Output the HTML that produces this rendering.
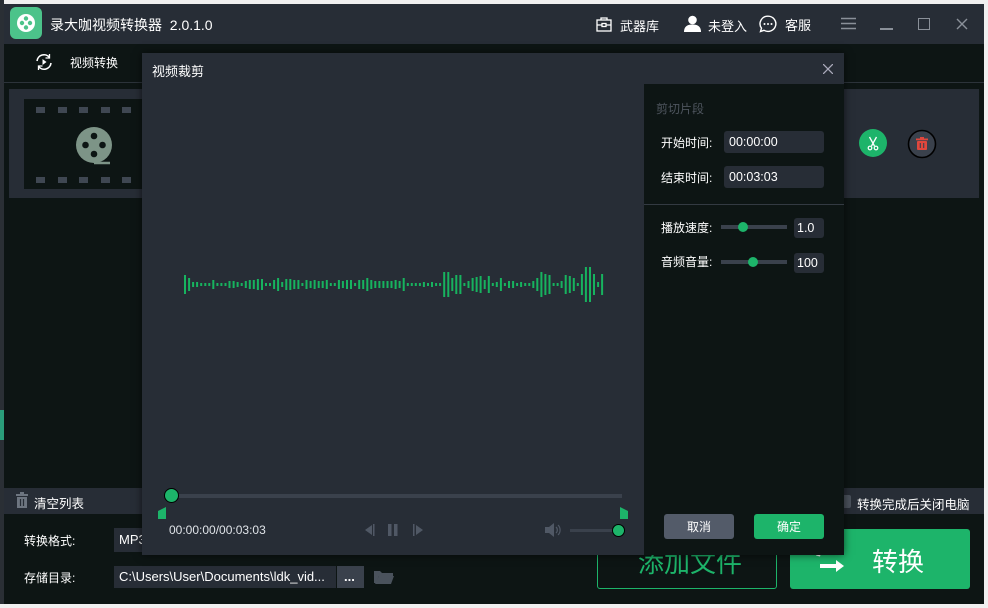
<!DOCTYPE html>
<html><head><meta charset="utf-8">
<style>
*{margin:0;padding:0;box-sizing:border-box}
body{width:988px;height:608px;overflow:hidden;background:#f0f0f0;font-family:"Liberation Sans","Noto Sans CJK SC",sans-serif;color:#fff;font-size:13px;position:relative}
.a{position:absolute}
.t{white-space:nowrap}
</style></head><body>
<div class="a" style="left:0;top:0;width:4px;height:608px;background:#2a2f35"></div>
<div class="a" style="left:0;top:410px;width:4px;height:30px;background:#2a9d7a"></div>
<!-- app -->
<div class="a" style="left:4px;top:4px;width:980px;height:600px;background:#0d1514"></div>
<div class="a" style="left:4px;top:4px;width:980px;height:40px;background:#272d36"></div>
<div class="a" style="left:10px;top:7px;width:32px;height:32px;border-radius:6px;background:#4cc38a"></div>
<svg class="a" style="left:13px;top:11px" width="26" height="24" viewBox="0 0 26 24"><circle cx="13" cy="12" r="9" fill="#fff"/><circle cx="13" cy="7.5" r="2.2" fill="#4cc38a"/><circle cx="9" cy="12" r="2.2" fill="#4cc38a"/><circle cx="17" cy="12" r="2.2" fill="#4cc38a"/><circle cx="13" cy="16.5" r="2.2" fill="#4cc38a"/></svg>
<div class="a t" style="left:50px;top:15px;font-size:14px">录大咖视频转换器&nbsp; 2.0.1.0</div>
<svg class="a" style="left:596px;top:17px" width="16" height="15" viewBox="0 0 16 15" fill="none" stroke="#fff" stroke-width="1.3"><rect x="1" y="3" width="14" height="11"/><path d="M5 3V1h6v2M1 8h14"/><rect x="6" y="6.5" width="4" height="3" fill="#272d36"/></svg>
<div class="a t" style="left:620px;top:16px">武器库</div>
<svg class="a" style="left:684px;top:15px" width="17" height="17" viewBox="0 0 17 17" fill="#fff"><circle cx="8.5" cy="5" r="4.3"/><path d="M0 17c0-6 4-7.5 8.5-7.5S17 11 17 17z"/></svg>
<div class="a t" style="left:708px;top:16px">未登入</div>
<svg class="a" style="left:759px;top:15px" width="18" height="18" viewBox="0 0 18 18"><path d="M9 1.2a7.8 7.6 0 1 1-4 14.1L1.5 16.5l1-3.3A7.8 7.6 0 0 1 9 1.2z" fill="none" stroke="#fff" stroke-width="1.4"/><circle cx="5.5" cy="9" r="1" fill="#fff"/><circle cx="9" cy="9" r="1" fill="#fff"/><circle cx="12.5" cy="9" r="1" fill="#fff"/></svg>
<div class="a t" style="left:785px;top:15px">客服</div>
<svg class="a" style="left:841px;top:17px" width="15" height="13"><path d="M0 1.5h15M0 6.5h15M0 11.5h15" stroke="#8a9099" stroke-width="1.6"/></svg>
<div class="a" style="left:880px;top:28px;width:13px;height:2px;background:#8a9099"></div>
<div class="a" style="left:918px;top:18px;width:12px;height:12px;border:1.5px solid #8a9099"></div>
<svg class="a" style="left:956px;top:18px" width="12" height="12"><path d="M1 1l10 10M11 1L1 11" stroke="#8a9099" stroke-width="1.4"/></svg>
<!-- tab -->
<svg class="a" style="left:34px;top:53px" width="20" height="18" viewBox="0 0 20 18" fill="none" stroke="#fff" stroke-width="1.6"><path d="M3 8a7 7 0 0 1 12.5-3.5M17 10a7 7 0 0 1-12.5 3.5"/><path d="M15.5 1v4h-4M4.5 17v-4h4" stroke-width="1.3"/><path d="M8.5 6v6l4-3z" fill="#fff" stroke="none"/></svg>
<div class="a t" style="left:70px;top:54px;font-size:12px">视频转换</div>
<div class="a" style="left:4px;top:82px;width:980px;height:1px;background:#2c333a"></div>
<div class="a" style="left:9px;top:89px;width:970px;height:109px;background:#272d36"></div>
<div class="a" style="left:24px;top:99px;width:130px;height:90px;background:#0d1514"></div>
<svg class="a" style="left:34px;top:104px" width="110" height="80"><g fill="#3f4752"><rect x="2" y="3" width="9" height="6"/><rect x="24" y="3" width="9" height="6"/><rect x="45" y="3" width="9" height="6"/><rect x="67" y="3" width="9" height="6"/><rect x="88" y="3" width="9" height="6"/><rect x="2" y="73" width="9" height="6"/><rect x="24" y="73" width="9" height="6"/><rect x="45" y="73" width="9" height="6"/><rect x="67" y="73" width="9" height="6"/><rect x="88" y="73" width="9" height="6"/></g><circle cx="60" cy="41" r="18" fill="#7d9487"/><path d="M60 59h16" stroke="#7d9487" stroke-width="2.5"/><g fill="#0d1514"><circle cx="60" cy="32" r="3.3"/><circle cx="51.5" cy="41" r="3.3"/><circle cx="68.5" cy="41" r="3.3"/><circle cx="60" cy="50" r="3.3"/></g></svg>
<svg class="a" style="left:859px;top:129px" width="30" height="30"><circle cx="14" cy="14" r="14" fill="#1db46a"/><path d="M10.5 8l5 9M17.5 8l-5 9" stroke="#fff" stroke-width="1.3"/><circle cx="11" cy="19" r="1.8" fill="none" stroke="#fff" stroke-width="1.2"/><circle cx="17" cy="19" r="1.8" fill="none" stroke="#fff" stroke-width="1.2"/></svg>
<svg class="a" style="left:907px;top:129px" width="30" height="30"><circle cx="15" cy="15" r="13.5" fill="#3a414c" stroke="#000" stroke-width="1.6"/><rect x="10" y="12" width="10" height="9" rx="1" fill="#e0473d"/><rect x="9" y="9.5" width="12" height="1.8" fill="#e0473d"/><rect x="13" y="8" width="4" height="2" fill="#e0473d"/><path d="M13.3 14v5M16.7 14v5" stroke="#3a414c" stroke-width="1.1"/></svg>
<!-- clear bar -->
<div class="a" style="left:4px;top:488px;width:980px;height:26px;background:#272d36"></div>
<svg class="a" style="left:15px;top:492px" width="14" height="16"><rect x="1" y="2" width="12" height="2" fill="#6d7580"/><rect x="5" y="0" width="4" height="2" fill="#6d7580"/><rect x="2" y="5" width="10" height="11" fill="#6d7580"/><path d="M5.5 7v7M8.5 7v7" stroke="#272d36" stroke-width="1.2"/></svg>
<div class="a t" style="left:34px;top:493px;font-size:12.5px">清空列表</div>
<div class="a" style="left:840px;top:495px;width:11px;height:13px;background:#4a515b;border-radius:2px"></div>
<div class="a t" style="left:857px;top:494px;font-size:12.5px">转换完成后关闭电脑</div>
<div class="a t" style="left:24px;top:532px;font-size:12px">转换格式:</div>
<div class="a" style="left:114px;top:528px;width:40px;height:24px;background:#272d36"></div>
<div class="a t" style="left:119px;top:532px">MP3</div>
<div class="a t" style="left:24px;top:569px;font-size:12px">存储目录:</div>
<div class="a" style="left:114px;top:566px;width:222px;height:22px;background:#272d36"></div>
<div class="a t" style="left:119px;top:569px">C:\Users\User\Documents\ldk_vid...</div>
<div class="a" style="left:337px;top:566px;width:27px;height:22px;background:#3a414c"></div>
<div class="a t" style="left:344px;top:569px;font-weight:bold">...</div>
<svg class="a" style="left:373px;top:569px" width="22" height="16"><path d="M1 2h6l2 2h11v3H6L3 14H1z" fill="#4a525c"/><path d="M6 7h15l-3 8H2z" fill="#4a525c"/></svg>
<div class="a" style="left:597px;top:529px;width:180px;height:60px;border:1.5px solid #1db46a;border-radius:3px"></div>
<div class="a t" style="left:638px;top:543px;font-size:26px;color:#1db46a">添加文件</div>
<div class="a" style="left:790px;top:529px;width:180px;height:60px;background:#1db46a;border-radius:3px"></div>
<svg class="a" style="left:812px;top:540px" width="36" height="40" viewBox="0 0 36 40" fill="none" stroke="#fff" stroke-width="4"><path d="M6 16a12 12 0 0 1 20-6"/><path d="M8 26h18"/><path d="M24 20l8 6-8 6z" fill="#fff" stroke="none"/></svg>
<div class="a t" style="left:872px;top:542px;font-size:26px">转换</div>
<div class="a" style="left:0;top:604px;width:988px;height:4px;background:#f0f0f0"></div>
<!-- dialog -->
<div class="a" style="left:142px;top:53px;width:702px;height:502px;background:#272d36;box-shadow:0 0 8px rgba(0,0,0,.6)"></div>
<div class="a t" style="left:152px;top:61px">视频裁剪</div>
<svg class="a" style="left:823px;top:64px" width="10" height="10"><path d="M0 0l10 10M10 0L0 10" stroke="#aab" stroke-width="1.3"/></svg>
<div class="a" style="left:644px;top:84px;width:200px;height:471px;background:#0d1514"></div>
<div class="a t" style="left:656px;top:100px;font-size:12px;color:#4e555e">剪切片段</div>
<div class="a t" style="left:661px;top:134px;font-size:12px">开始时间:</div>
<div class="a" style="left:724px;top:131px;width:100px;height:22px;background:#272d36;border-radius:3px"></div>
<div class="a t" style="left:729px;top:135px;font-size:12.5px">00:00:00</div>
<div class="a t" style="left:661px;top:169px;font-size:12px">结束时间:</div>
<div class="a" style="left:724px;top:166px;width:100px;height:22px;background:#272d36;border-radius:3px"></div>
<div class="a t" style="left:729px;top:170px;font-size:12.5px">00:03:03</div>
<div class="a" style="left:644px;top:204px;width:200px;height:1px;background:#333a42"></div>
<div class="a t" style="left:661px;top:219px;font-size:12px">播放速度:</div>
<div class="a" style="left:721px;top:225px;width:66px;height:4px;background:#3a414c"></div>
<div class="a" style="left:738px;top:222px;width:10px;height:10px;border-radius:50%;background:#1db46a"></div>
<div class="a" style="left:794px;top:218px;width:30px;height:20px;background:#272d36;border-radius:3px"></div>
<div class="a t" style="left:797px;top:221px;font-size:12.5px">1.0</div>
<div class="a t" style="left:661px;top:253px;font-size:12px">音频音量:</div>
<div class="a" style="left:721px;top:260px;width:66px;height:4px;background:#3a414c"></div>
<div class="a" style="left:748px;top:257px;width:10px;height:10px;border-radius:50%;background:#1db46a"></div>
<div class="a" style="left:794px;top:253px;width:30px;height:20px;background:#272d36;border-radius:3px"></div>
<div class="a t" style="left:797px;top:256px;font-size:12.5px">100</div>
<div class="a" style="left:664px;top:514px;width:70px;height:25px;background:#535b69;border-radius:3px"></div>
<div class="a t" style="left:687px;top:518px;font-size:12px">取消</div>
<div class="a" style="left:754px;top:514px;width:70px;height:25px;background:#1db46a;border-radius:3px"></div>
<div class="a t" style="left:777px;top:518px;font-size:12px">确定</div>
<svg class="a" style="left:180px;top:255px" width="430" height="60" id="wv"></svg>
<div class="a" style="left:170px;top:494px;width:452px;height:4px;background:#3a414c"></div>
<div class="a" style="left:164px;top:488px;width:15px;height:15px;border-radius:50%;background:#1db46a;border:1px solid #000"></div>
<svg class="a" style="left:158px;top:507px" width="8" height="12"><path d="M0 4L8 0v12H0z" fill="#1db46a"/></svg>
<svg class="a" style="left:620px;top:507px" width="8" height="12"><path d="M0 0l8 4v8H0z" fill="#1db46a"/></svg>
<div class="a t" style="left:169px;top:523px;font-size:12px;color:#dfe3e8">00:00:00/00:03:03</div>
<svg class="a" style="left:365px;top:523px" width="60" height="14" fill="#505865"><path d="M0 7l7-5v10z"/><rect x="8" y="1" width="1.5" height="12"/><rect x="23" y="1" width="3.5" height="12"/><rect x="29" y="1" width="3.5" height="12"/><rect x="48" y="1" width="1.5" height="12"/><path d="M51 2l7 5-7 5z"/></svg>
<svg class="a" style="left:545px;top:523px" width="16" height="14" fill="#505865"><path d="M0 4h4l5-4v14l-5-4H0z"/><path d="M11 4a4 4 0 0 1 0 6M13 2a7 7 0 0 1 0 10" stroke="#505865" fill="none" stroke-width="1.2"/></svg>
<div class="a" style="left:570px;top:529px;width:50px;height:3px;background:#3a414c"></div>
<div class="a" style="left:612px;top:524px;width:13px;height:13px;border-radius:50%;background:#1db46a;border:1px solid #000"></div>
<script>
var h=[9,6,2,2,1,1,1,4,1,1,1,3,3,2,1,3,4,4,5,5,1,1,4,6,2,5,5,4,4,1,4,3,4,3,3,4,1,1,4,3,4,4,1,4,4,6,4,3,3,3,3,3,4,3,6,1,1,1,1,2,1,2,1,1,12,12,6,9,9,1,3,6,7,8,4,8,1,2,6,1,3,3,1,2,1,1,3,6,12,10,9,1,1,3,9,8,6,1,10,17,17,10,2,10];
var s='';for(var i=0;i<h.length;i++){var x=4+i*4.05;s+='<rect x="'+x.toFixed(1)+'" y="'+(29-h[i])+'" width="2" height="'+(h[i]*2+1)+'" fill="#17b35f"/>';}
document.getElementById('wv').innerHTML=s;
</script>
</body></html>
